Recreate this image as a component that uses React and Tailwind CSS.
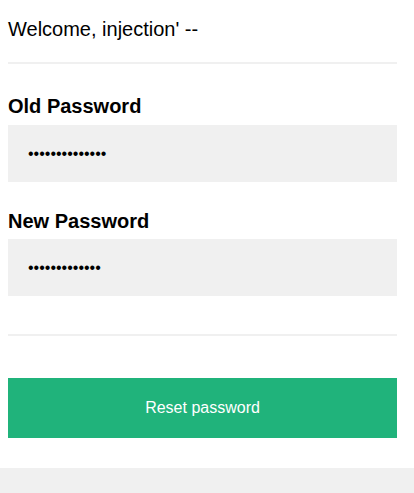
export default function App() {
    return (
        <div className="bg-white font-['Liberation_Sans',Arial,sans-serif] text-black">
            <div className="ml-2 w-[389px]">
                <p className="pt-[18px] text-[20px] leading-[23px]">Welcome, injection' --</p>
                <div className="mt-[21px] h-[2px] bg-[#f0f0f0]" />

                <label className="mt-[31px] block text-[20px] font-bold leading-[23px]">Old Password</label>
                <input
                    type="password"
                    readOnly
                    defaultValue="oldpassword123"
                    className="mt-[7px] block h-[57px] w-full bg-[#f0f0f0] pl-5 text-[16px] text-black outline-none"
                />

                <label className="mt-[28px] block text-[20px] font-bold leading-[23px]">New Password</label>
                <input
                    type="password"
                    readOnly
                    defaultValue="newpassword12"
                    className="mt-[6px] block h-[57px] w-full bg-[#f0f0f0] pl-5 text-[16px] text-black outline-none"
                />

                <div className="mt-[38px] h-[2px] bg-[#f0f0f0]" />

                <button className="mt-[42px] block h-[60px] w-full bg-[#20b37b] text-[16px] text-white">
                    Reset password
                </button>
            </div>
            <div className="mt-[30px] h-[25px] w-full bg-[#f0f0f0]" />
        </div>
    )
}
